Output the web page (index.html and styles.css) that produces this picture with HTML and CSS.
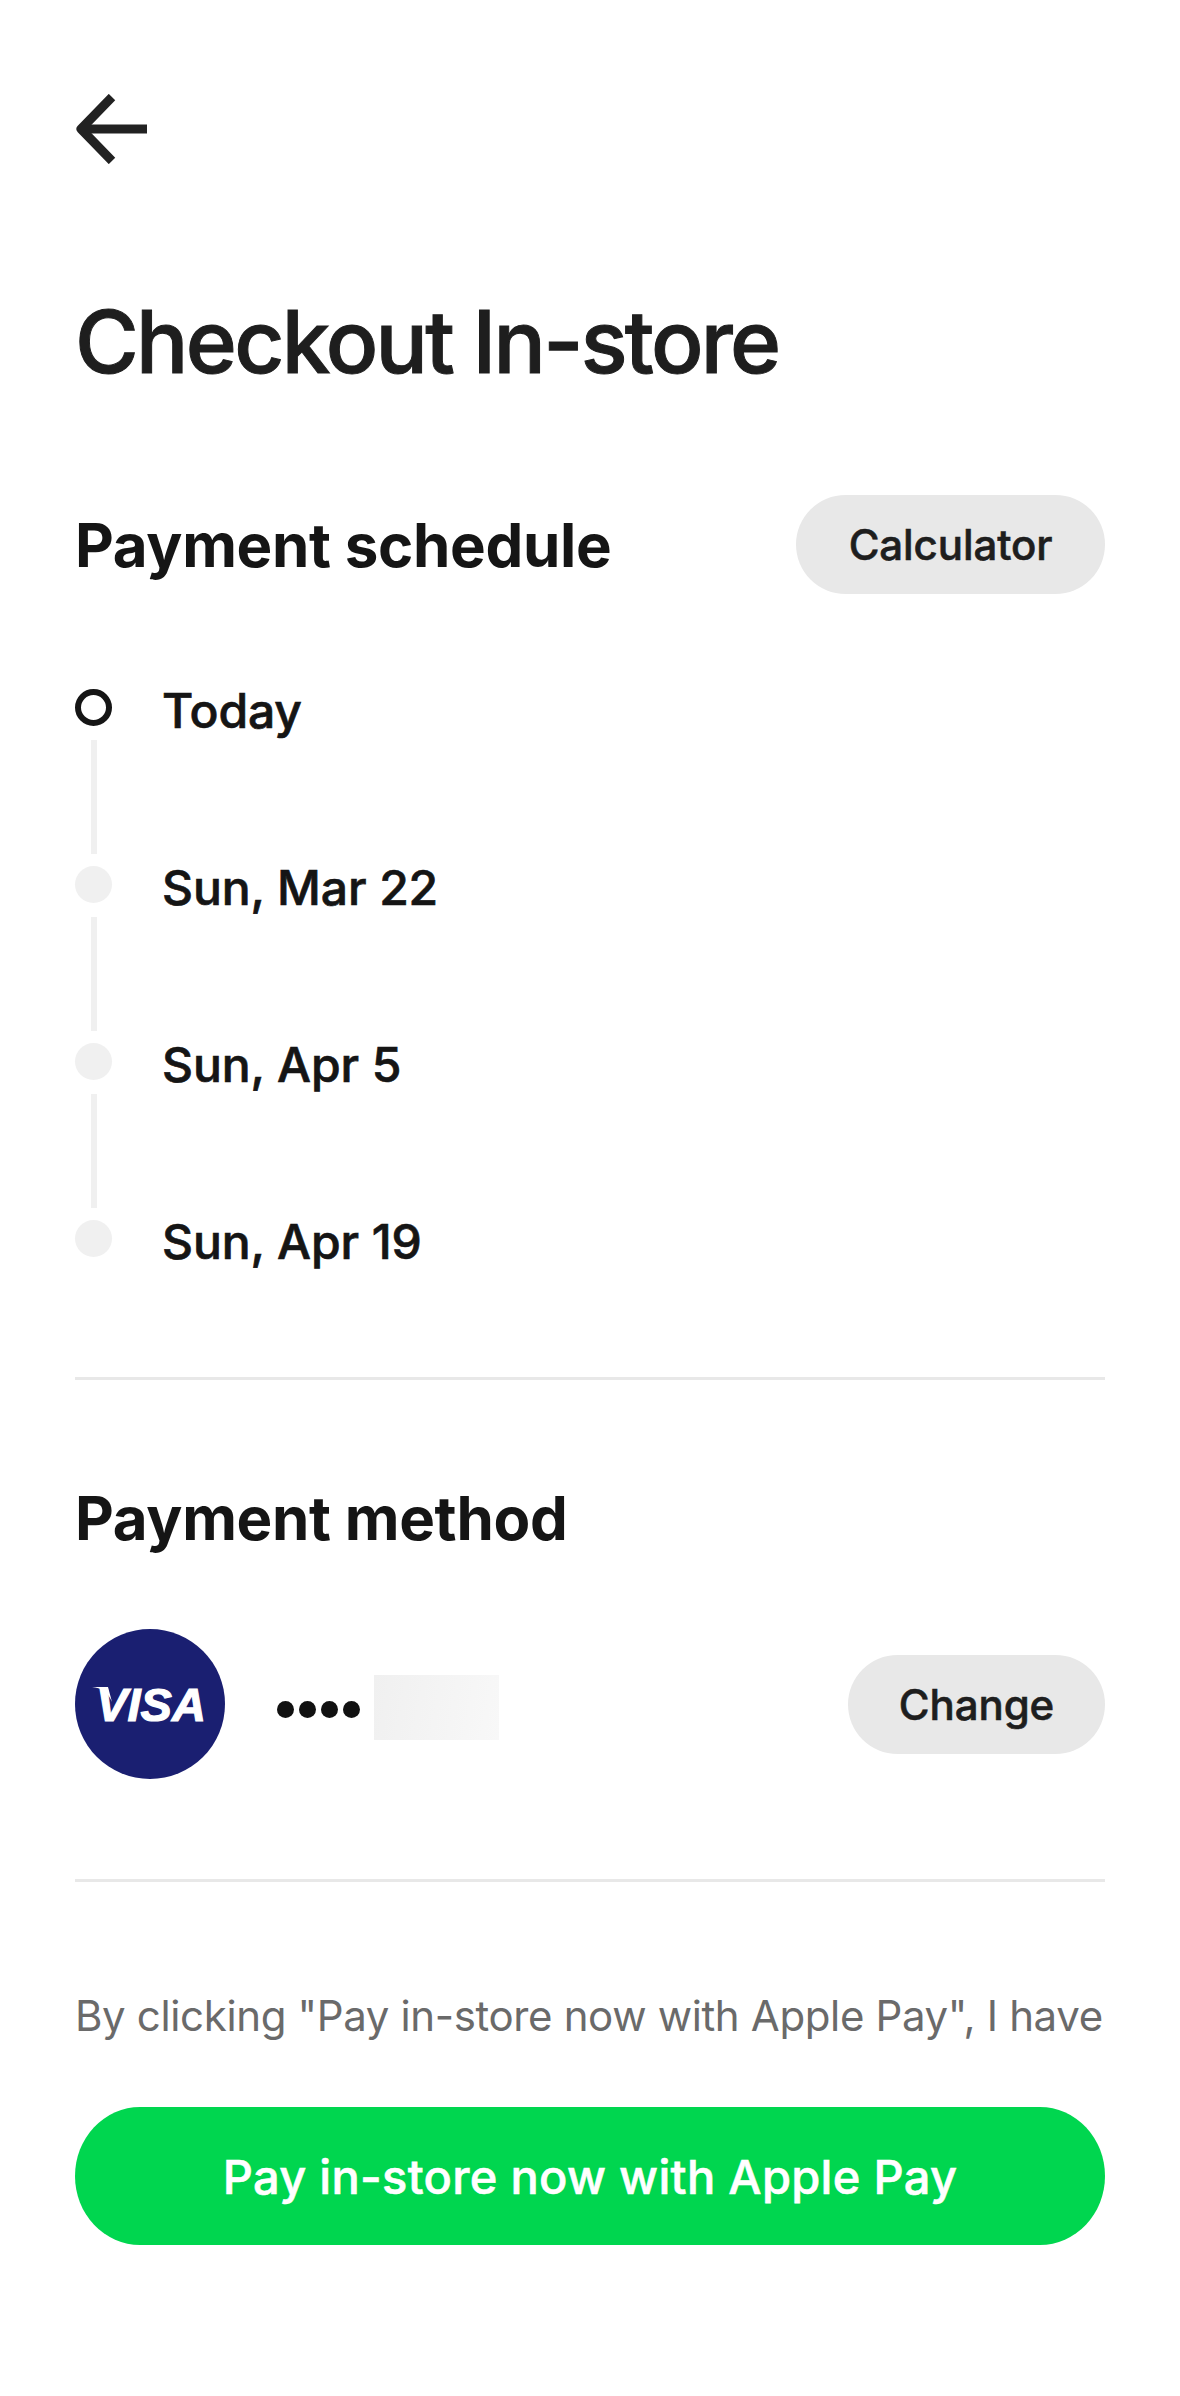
FILE: index.html
```html
<!DOCTYPE html>
<html lang="en">
<head>
    <meta charset="UTF-8">
    <title>Checkout In-store</title>
    <link rel="stylesheet" href="styles.css">
</head>
<body>
    <div class="page">
        <a class="back" href="#">
            <svg width="72" height="70" viewBox="0 0 72 70" fill="none" stroke="#222" stroke-width="9">
                <path d="M37 3 L6 35 L37 67" stroke-linejoin="round"/>
                <path d="M6 35 H72"/>
            </svg>
        </a>

        <h1 class="title">Checkout In-store</h1>

        <div class="head-row">
            <h2 class="heading">Payment schedule</h2>
            <button class="pill pill-calc">Calculator</button>
        </div>

        <ul class="schedule">
            <li class="step step-now">
                <div class="rail"><span class="dot"></span><span class="line"></span></div>
                <span class="step-date">Today</span>
            </li>
            <li class="step">
                <div class="rail"><span class="dot"></span><span class="line"></span></div>
                <span class="step-date">Sun, Mar 22</span>
            </li>
            <li class="step">
                <div class="rail"><span class="dot"></span><span class="line"></span></div>
                <span class="step-date">Sun, Apr 5</span>
            </li>
            <li class="step">
                <div class="rail"><span class="dot"></span></div>
                <span class="step-date">Sun, Apr 19</span>
            </li>
        </ul>

        <hr class="rule rule-first">

        <h2 class="heading heading-method">Payment method</h2>

        <div class="method">
            <div class="visa">
                <svg width="150" height="150" viewBox="0 0 150 150">
                    <circle cx="75" cy="75" r="75" fill="#1a1f71"/>
                    <path d="M17 58 C26 59 33 63 37 73 L33 58 Z" fill="#fff"/>
                    <text class="visa-text" x="76" y="92" text-anchor="middle">VISA</text>
                </svg>
            </div>
            <div class="masked">
                <span></span><span></span><span></span><span></span>
            </div>
            <div class="redacted"></div>
            <button class="pill pill-change">Change</button>
        </div>

        <hr class="rule rule-second">

        <p class="terms">By clicking "Pay in-store now with Apple Pay", I have</p>

        <button class="pay">Pay in-store now with Apple Pay</button>
    </div>
</body>
</html>
```

FILE: styles.css
```css
* {
    margin: 0;
    padding: 0;
    list-style: none;
    box-sizing: border-box;
}
body {
    background-color: #fff;
    color: #151515;
    font-family: Inter, "Liberation Sans", sans-serif;
}
.page {
    width: 1180px;
    height: 2396px;
    padding: 94px 75px 0;
    overflow: hidden;
}
.back {
    display: block;
    height: 70px;
}
.back svg {
    display: block;
}
.title {
    margin-top: 125px;
    font-size: 87px;
    line-height: 106px;
    font-weight: 500;
    letter-spacing: -2.7px;
    -webkit-text-stroke: 1px #1e1e1e;
    color: #1e1e1e;
}
.head-row {
    display: flex;
    align-items: center;
    justify-content: space-between;
    margin-top: 100px;
}
.heading {
    font-size: 60px;
    line-height: 74px;
    font-weight: 700;
    letter-spacing: -0.3px;
}
.pill {
    height: 99px;
    border: 0;
    border-radius: 50px;
    background-color: #e8e8e8;
    color: #1e1e1e;
    font-family: inherit;
    font-size: 42px;
    font-weight: 500;
    letter-spacing: -0.1px;
    -webkit-text-stroke: 0.6px #1e1e1e;
}
.pill-calc {
    width: 309px;
}
.pill-change {
    width: 257px;
    margin-left: auto;
}
.schedule {
    margin-top: 95px;
}
.step {
    display: flex;
    height: 177px;
}
.rail {
    display: flex;
    flex-direction: column;
    align-items: center;
    width: 37px;
}
.dot {
    flex: none;
    width: 37px;
    height: 37px;
    border-radius: 50%;
    background-color: #f0f0f0;
}
.step-now .dot {
    background-color: transparent;
    border: 6px solid #151515;
}
.line {
    flex: none;
    width: 6px;
    height: 114px;
    margin-top: 14px;
    background-color: #f0f0f0;
}
.step-date {
    margin-left: 50px;
    padding-top: 3px;
    font-size: 48px;
    line-height: 37px;
    font-weight: 500;
    letter-spacing: -0.1px;
    -webkit-text-stroke: 0.7px #151515;
}
.rule {
    height: 3px;
    border: 0;
    background-color: #e8e8e8;
}
.rule-first {
    margin-top: -20px;
}
.heading-method {
    margin-top: 101px;
}
.method {
    display: flex;
    align-items: center;
    margin-top: 74px;
}
.visa,
.visa svg {
    display: block;
    width: 150px;
    height: 150px;
}
.visa-text {
    font-family: "Liberation Sans", sans-serif;
    font-size: 47px;
    font-weight: 700;
    font-style: italic;
    fill: #fff;
    stroke: #fff;
    stroke-width: 1.2px;
}
.masked {
    display: flex;
    gap: 5px;
    margin-left: 52px;
    margin-top: 10px;
}
.masked span {
    width: 17px;
    height: 17px;
    border-radius: 50%;
    background-color: #111;
}
.redacted {
    width: 125px;
    height: 65px;
    margin-left: 14px;
    margin-top: 6px;
    background: linear-gradient(100deg, #f0f0f0, #f8f8f8);
}
.rule-second {
    margin-top: 100px;
}
.terms {
    margin-top: 108px;
    font-size: 42px;
    line-height: 52px;
    letter-spacing: -0.36px;
    color: #6a6a6a;
    white-space: nowrap;
}
.pay {
    display: block;
    width: 100%;
    height: 138px;
    margin-top: 65px;
    border: 0;
    border-radius: 65px / 69px;
    background-color: #00d64f;
    color: #fff;
    font-family: inherit;
    font-size: 47px;
    font-weight: 500;
    letter-spacing: 0.3px;
    -webkit-text-stroke: 0.6px #fff;
}
```
